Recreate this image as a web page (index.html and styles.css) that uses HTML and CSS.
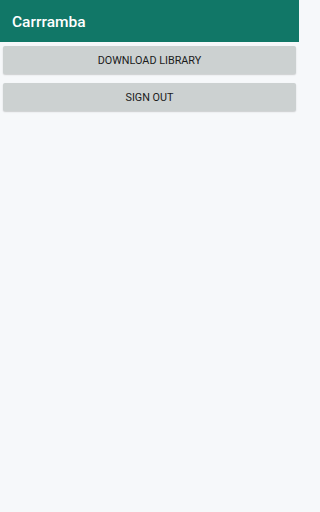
FILE: index.html
```html
<!DOCTYPE html>
<html>
<head>
<meta charset="utf-8">
<link rel="stylesheet" href="styles.css">
</head>
<body>
<header class="appbar"><span class="title">Carrramba</span></header>
<main class="content">
  <button class="btn">DOWNLOAD LIBRARY</button>
  <button class="btn">SIGN OUT</button>
</main>
</body>
</html>
```
FILE: styles.css
```css
html, body {
  margin: 0;
  padding: 0;
  background: #f6f8fa;
  font-family: Roboto, "Liberation Sans", sans-serif;
}
body {
  width: 299px;
  height: 512px;
}
.appbar {
  height: 42px;
  background: #117767;
  display: flex;
  align-items: center;
  padding-left: 12px;
}
.title {
  color: #ffffff;
  font-size: 15.5px;
  font-weight: 500;
  padding-top: 1px;
}
.content {
  display: flex;
  flex-direction: column;
  gap: 9px;
  padding: 4px 3px 0 3px;
}
.btn {
  height: 28px;
  border: none;
  border-radius: 2px;
  background: #ccd1d1;
  color: #1b1b1b;
  font-family: Roboto, "Liberation Sans", sans-serif;
  font-size: 10.8px;
  font-weight: 400;
  letter-spacing: 0;
  box-shadow: 0 1px 1.5px rgba(0,0,0,0.18);
  padding: 0;
}
```
